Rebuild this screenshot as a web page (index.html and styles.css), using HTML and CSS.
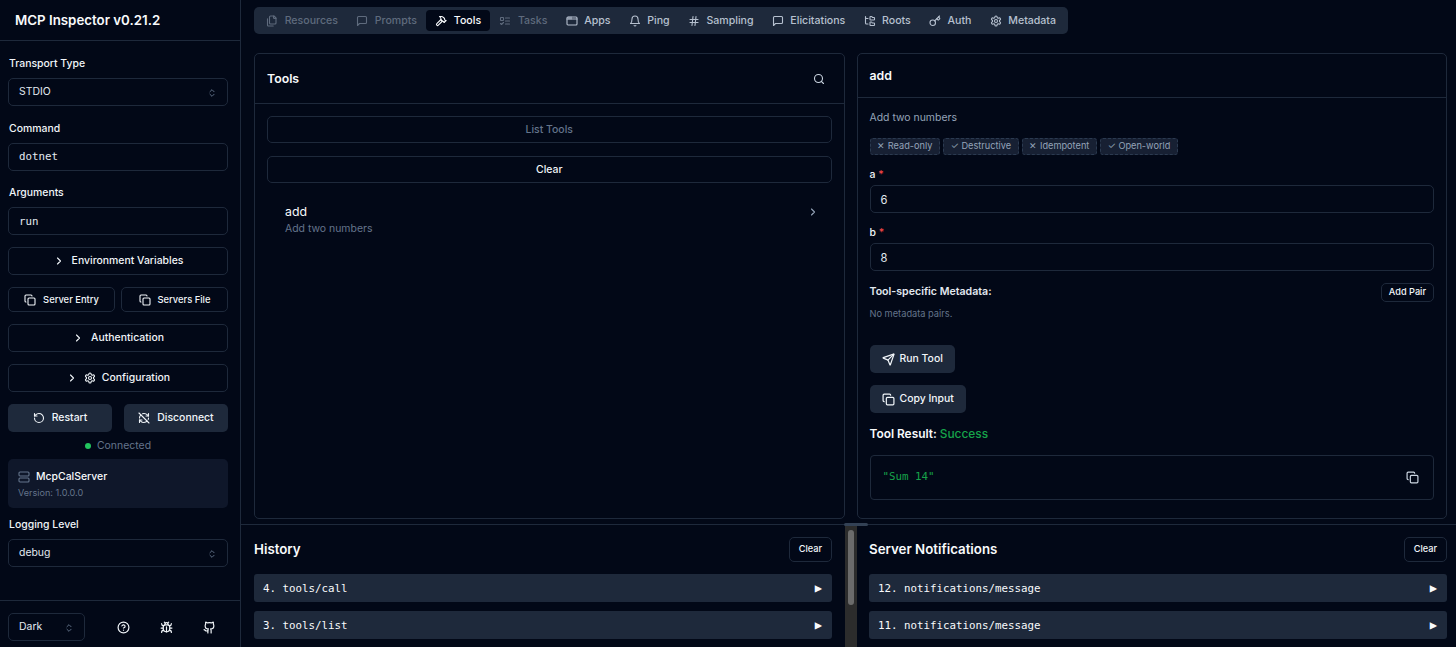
FILE: index.html
```html
<!DOCTYPE html>
<html lang="en">
<head>
<meta charset="utf-8">
<title>MCP Inspector</title>
<link rel="stylesheet" href="styles.css">
</head>
<body>
<svg class="sprite" xmlns="http://www.w3.org/2000/svg">
<symbol id="i-copy" viewBox="0 0 24 24"><rect x="8" y="8" width="14" height="14" rx="2"/><path d="M4 16c-1.1 0-2-.9-2-2V4c0-1.1.9-2 2-2h10c1.1 0 2 .9 2 2"/></symbol>
<symbol id="i-updown" viewBox="0 0 24 24"><path d="m7 15 5 5 5-5"/><path d="m7 9 5-5 5 5"/></symbol>
<symbol id="i-right" viewBox="0 0 24 24"><path d="m9 18 6-6-6-6"/></symbol>
<symbol id="i-gear" viewBox="0 0 24 24"><path d="M12.22 2h-.44a2 2 0 0 0-2 2v.18a2 2 0 0 1-1 1.73l-.43.25a2 2 0 0 1-2 0l-.15-.08a2 2 0 0 0-2.73.73l-.22.38a2 2 0 0 0 .73 2.73l.15.1a2 2 0 0 1 1 1.72v.51a2 2 0 0 1-1 1.74l-.15.09a2 2 0 0 0-.73 2.73l.22.38a2 2 0 0 0 2.73.73l.15-.08a2 2 0 0 1 2 0l.43.25a2 2 0 0 1 1 1.73V20a2 2 0 0 0 2 2h.44a2 2 0 0 0 2-2v-.18a2 2 0 0 1 1-1.73l.43-.25a2 2 0 0 1 2 0l.15.08a2 2 0 0 0 2.73-.73l.22-.39a2 2 0 0 0-.73-2.73l-.15-.08a2 2 0 0 1-1-1.74v-.5a2 2 0 0 1 1-1.74l.15-.09a2 2 0 0 0 .73-2.73l-.22-.38a2 2 0 0 0-2.73-.73l-.15.08a2 2 0 0 1-2 0l-.43-.25a2 2 0 0 1-1-1.73V4a2 2 0 0 0-2-2z"/><circle cx="12" cy="12" r="3"/></symbol>
<symbol id="i-restart" viewBox="0 0 24 24"><path d="M3 12a9 9 0 1 0 9-9 9.75 9.75 0 0 0-6.74 2.74L3 8"/><path d="M3 3v5h5"/></symbol>
<symbol id="i-off" viewBox="0 0 24 24"><path d="M21 8L18.74 5.74A9.75 9.75 0 0 0 12 3C11 3 10.03 3.16 9.13 3.47"/><path d="M8 16H3v5"/><path d="M3 12C3 9.51 4 7.26 5.64 5.64"/><path d="m3 16 2.26 2.26A9.75 9.75 0 0 0 12 21c2.49 0 4.74-1 6.36-2.64"/><path d="M21 12c0 1-.16 1.97-.47 2.87"/><path d="M21 3v5h-5"/><path d="M22 22 2 2"/></symbol>
<symbol id="i-server" viewBox="0 0 24 24"><rect x="2" y="2" width="20" height="8" rx="2"/><rect x="2" y="14" width="20" height="8" rx="2"/></symbol>
<symbol id="i-help" viewBox="0 0 24 24"><circle cx="12" cy="12" r="10"/><path d="M9.09 9a3 3 0 0 1 5.83 1c0 2-3 3-3 3"/><path d="M12 17h.01"/></symbol>
<symbol id="i-bug" viewBox="0 0 24 24"><path d="m8 2 1.88 1.88"/><path d="M14.12 3.88 16 2"/><path d="M9 7.13v-1a3.003 3.003 0 1 1 6 0v1"/><path d="M12 20c-3.3 0-6-2.7-6-6v-3a4 4 0 0 1 4-4h4a4 4 0 0 1 4 4v3c0 3.3-2.7 6-6 6"/><path d="M12 20v-9"/><path d="M6.53 9C4.6 8.8 3 7.1 3 5"/><path d="M6 13H2"/><path d="M3 21c0-2.1 1.7-3.9 3.8-4"/><path d="M20.97 5c0 2.1-1.6 3.8-3.5 4"/><path d="M22 13h-4"/><path d="M17.2 17c2.1.1 3.8 1.9 3.8 4"/></symbol>
<symbol id="i-github" viewBox="0 0 24 24"><path d="M15 22v-4a4.8 4.8 0 0 0-1-3.5c3 0 6-2 6-5.5.08-1.25-.27-2.48-1-3.5.28-1.15.28-2.35 0-3.5 0 0-1 0-3 1.5-2.64-.5-5.36-.5-8 0C6 2 5 2 5 2c-.3 1.15-.3 2.35 0 3.5A5.403 5.403 0 0 0 4 9c0 3.5 3 5.5 6 5.5-.39.49-.68 1.05-.85 1.65-.17.6-.22 1.23-.15 1.85v4"/><path d="M9 18c-4.51 2-5-2-7-2"/></symbol>
<symbol id="i-files" viewBox="0 0 24 24"><path d="M20 7h-3a2 2 0 0 1-2-2V2"/><path d="M9 18a2 2 0 0 1-2-2V4a2 2 0 0 1 2-2h7l4 4v10a2 2 0 0 1-2 2Z"/><path d="M3 7.6v12.8A1.6 1.6 0 0 0 4.6 22h9.8"/></symbol>
<symbol id="i-msg" viewBox="0 0 24 24"><path d="M21 15a2 2 0 0 1-2 2H7l-4 4V5a2 2 0 0 1 2-2h14a2 2 0 0 1 2 2z"/></symbol>
<symbol id="i-hammer" viewBox="0 0 24 24"><path d="m15 12-8.373 8.373a1 1 0 1 1-3-3L12 9"/><path d="m18 15 4-4"/><path d="m21.5 11.5-1.914-1.914A2 2 0 0 1 19 8.172V7l-2.26-2.26a6 6 0 0 0-4.202-1.756L9 2.96l.92.82A6.18 6.18 0 0 1 12 8.4V10l2 2h1.172a2 2 0 0 1 1.414.586L18.5 14.5"/></symbol>
<symbol id="i-todo" viewBox="0 0 24 24"><rect x="3" y="5" width="6" height="6" rx="1"/><path d="m3 17 2 2 4-4"/><path d="M13 6h8"/><path d="M13 12h8"/><path d="M13 18h8"/></symbol>
<symbol id="i-app" viewBox="0 0 24 24"><rect x="2" y="4" width="20" height="16" rx="2"/><path d="M10 4v4"/><path d="M2 8h20"/><path d="M6 4v4"/></symbol>
<symbol id="i-bell" viewBox="0 0 24 24"><path d="M6 8a6 6 0 0 1 12 0c0 7 3 9 3 9H3s3-2 3-9"/><path d="M10.3 21a1.94 1.94 0 0 0 3.4 0"/></symbol>
<symbol id="i-hash" viewBox="0 0 24 24"><path d="M4 9h16"/><path d="M4 15h16"/><path d="M10 3 8 21"/><path d="M16 3l-2 18"/></symbol>
<symbol id="i-tree" viewBox="0 0 24 24"><path d="M20 10a1 1 0 0 0 1-1V6a1 1 0 0 0-1-1h-2.5a1 1 0 0 1-.8-.4l-.9-1.2A1 1 0 0 0 15 3h-2a1 1 0 0 0-1 1v5a1 1 0 0 0 1 1Z"/><path d="M20 21a1 1 0 0 0 1-1v-3a1 1 0 0 0-1-1h-2.9a1 1 0 0 1-.88-.55l-.42-.85a1 1 0 0 0-.92-.6H13a1 1 0 0 0-1 1v5a1 1 0 0 0 1 1Z"/><path d="M3 5a2 2 0 0 0 2 2h3"/><path d="M3 3v13a2 2 0 0 0 2 2h3"/></symbol>
<symbol id="i-key" viewBox="0 0 24 24"><path d="M15.5 7.5l2.3 2.3a1 1 0 0 0 1.4 0l2.1-2.1a1 1 0 0 0 0-1.4L19 4"/><path d="m21 2-9.6 9.6"/><circle cx="7.5" cy="15.5" r="5.5"/></symbol>
<symbol id="i-search" viewBox="0 0 24 24"><circle cx="11" cy="11" r="8"/><path d="m21 21-4.3-4.3"/></symbol>
<symbol id="i-send" viewBox="0 0 24 24"><path d="M14.536 21.686a.5.5 0 0 0 .937-.024l6.5-19a.496.496 0 0 0-.635-.635l-19 6.5a.5.5 0 0 0-.024.937l7.93 3.18a2 2 0 0 1 1.112 1.11z"/><path d="m21.854 2.147-10.94 10.939"/></symbol>
</svg>

<div class="app">
  <aside class="sidebar">
    <header class="brand">MCP Inspector v0.21.2</header>
    <div class="side-body">
      <label class="label">Transport Type</label>
      <div class="control select"><span>STDIO</span><svg class="ic ic-updown"><use href="#i-updown"/></svg></div>
      <label class="label label-next">Command</label>
      <div class="control mono">dotnet</div>
      <label class="label label-next">Arguments</label>
      <div class="control mono">run</div>
      <button class="btn outline wide env"><svg class="ic"><use href="#i-right"/></svg><span>Environment Variables</span></button>
      <div class="pair small-pair">
        <button class="btn outline small"><svg class="ic"><use href="#i-copy"/></svg>Server Entry</button>
        <button class="btn outline small"><svg class="ic"><use href="#i-copy"/></svg>Servers File</button>
      </div>
      <button class="btn outline wide auth"><svg class="ic"><use href="#i-right"/></svg><span>Authentication</span></button>
      <button class="btn outline wide conf"><svg class="ic"><use href="#i-right"/></svg><svg class="ic"><use href="#i-gear"/></svg><span>Configuration</span></button>
      <div class="pair action-pair">
        <button class="btn solid"><svg class="ic"><use href="#i-restart"/></svg>Restart</button>
        <button class="btn solid"><svg class="ic"><use href="#i-off"/></svg>Disconnect</button>
      </div>
      <div class="status"><i class="dot"></i>Connected</div>
      <div class="server-card">
        <div class="server-name"><svg class="ic server-ic"><use href="#i-server"/></svg>McpCalServer</div>
        <div class="server-ver">Version: 1.0.0.0</div>
      </div>
      <label class="label label-log">Logging Level</label>
      <div class="control select"><span>debug</span><svg class="ic ic-updown"><use href="#i-updown"/></svg></div>
    </div>
    <footer class="side-foot">
      <div class="control select theme"><span>Dark</span><svg class="ic ic-updown"><use href="#i-updown"/></svg></div>
      <div class="foot-icons">
        <svg class="ic foot-ic"><use href="#i-help"/></svg>
        <svg class="ic foot-ic"><use href="#i-bug"/></svg>
        <svg class="ic foot-ic"><use href="#i-github"/></svg>
      </div>
    </footer>
  </aside>

  <main class="main">
    <div class="workspace">
      <nav class="tabs">
        <a class="tab off"><svg class="ic"><use href="#i-files"/></svg>Resources</a>
        <a class="tab off"><svg class="ic"><use href="#i-msg"/></svg>Prompts</a>
        <a class="tab active"><svg class="ic"><use href="#i-hammer"/></svg>Tools</a>
        <a class="tab off"><svg class="ic"><use href="#i-todo"/></svg>Tasks</a>
        <a class="tab"><svg class="ic"><use href="#i-app"/></svg>Apps</a>
        <a class="tab"><svg class="ic"><use href="#i-bell"/></svg>Ping</a>
        <a class="tab"><svg class="ic"><use href="#i-hash"/></svg>Sampling</a>
        <a class="tab"><svg class="ic"><use href="#i-msg"/></svg>Elicitations</a>
        <a class="tab"><svg class="ic"><use href="#i-tree"/></svg>Roots</a>
        <a class="tab"><svg class="ic"><use href="#i-key"/></svg>Auth</a>
        <a class="tab"><svg class="ic"><use href="#i-gear"/></svg>Metadata</a>
      </nav>
      <div class="panels">
        <section class="panel">
          <div class="panel-head list-head"><h2>Tools</h2><svg class="ic search"><use href="#i-search"/></svg></div>
          <div class="panel-body list-body">
            <button class="btn outline block faded">List Tools</button>
            <button class="btn outline block">Clear</button>
            <div class="tool-row">
              <div><div class="tool-name">add</div><div class="tool-desc">Add two numbers</div></div>
              <svg class="ic tool-chev"><use href="#i-right"/></svg>
            </div>
          </div>
        </section>
        <section class="panel">
          <div class="panel-head detail-head"><h2>add</h2></div>
          <div class="panel-body detail-body">
            <p class="desc">Add two numbers</p>
            <div class="badges">
              <span class="badge">✕ Read-only</span>
              <span class="badge">✓ Destructive</span>
              <span class="badge">✕ Idempotent</span>
              <span class="badge">✓ Open-world</span>
            </div>
            <div class="field-label">a <b class="req">*</b></div>
            <div class="control field">6</div>
            <div class="field-label">b <b class="req">*</b></div>
            <div class="control field">8</div>
            <div class="meta-head"><strong>Tool-specific Metadata:</strong><button class="btn outline add-pair">Add Pair</button></div>
            <p class="no-meta">No metadata pairs.</p>
            <div><button class="btn solid inline run"><svg class="ic"><use href="#i-send"/></svg>Run Tool</button></div>
            <div><button class="btn solid inline copy"><svg class="ic"><use href="#i-copy"/></svg>Copy Input</button></div>
            <div class="result-title">Tool Result: <span class="ok">Success</span></div>
            <div class="result"><code>"Sum 14"</code><svg class="ic"><use href="#i-copy"/></svg></div>
          </div>
        </section>
      </div>
    </div>
    <div class="console">
      <i class="grip"></i>
      <section class="log log-left">
        <div class="log-head"><h3>History</h3><button class="btn outline clear">Clear</button></div>
        <div class="log-row"><span>4. tools/call</span><em>▶</em></div>
        <div class="log-row"><span>3. tools/list</span><em>▶</em></div>
      </section>
      <div class="scroll"><i class="thumb"></i></div>
      <section class="log log-right">
        <div class="log-head"><h3>Server Notifications</h3><button class="btn outline clear">Clear</button></div>
        <div class="log-row"><span>12. notifications/message</span><em>▶</em></div>
        <div class="log-row"><span>11. notifications/message</span><em>▶</em></div>
      </section>
    </div>
  </main>
</div>
</body>
</html>
```

FILE: styles.css
```css
* { box-sizing: border-box; }
html, body { margin: 0; height: 100%; }
body {
  background: #020817;
  color: #f8fafc;
  font: 400 10.45px/1.4 Inter, "Liberation Sans", sans-serif;
  overflow: hidden;
}
.sprite { display: none; }
.ic {
  width: 12px; height: 12px; flex: none;
  fill: none; stroke: currentColor; stroke-width: 2.2;
  stroke-linecap: round; stroke-linejoin: round;
}
h2, h3, p { margin: 0; }
button { font: inherit; color: inherit; background: none; border: 0; padding: 0; }

.app { display: flex; height: 647px; }

/* sidebar */
.sidebar {
  width: 241px; flex: none;
  border-right: 1px solid #1e293b;
  display: flex; flex-direction: column;
}
.brand {
  height: 41px; padding: 0 15px; flex: none;
  display: flex; align-items: center;
  border-bottom: 1px solid #1e293b;
  font-size: 13.3px; font-weight: 600;
}
.side-body { flex: 1; padding: 14px 12px 0 8px; display: flex; flex-direction: column; }
.label { display: block; height: 16px; padding: 1px 0 0 1px; line-height: 16px; font-weight: 500; color: #f1f5f9; margin-bottom: 7px; }
.label-next { margin-top: 13.5px; }
.label-log { margin-top: 8px; }
.control {
  height: 28px; padding: 1px 10px 0;
  border: 1px solid #1e293b; border-radius: 5px;
  display: flex; align-items: center; justify-content: space-between;
  flex: none; color: #e2e8f0;
}
.mono { font: 400 10.8px "DejaVu Sans Mono", monospace; padding-top: 0; }
.ic-updown { width: 10px; height: 10px; color: #64748b; }
.btn {
  display: inline-flex; align-items: center; justify-content: center;
  gap: 7px; border-radius: 5px; font-weight: 500; flex: none;
}
.outline { border: 1px solid #1e293b; background: #020817; color: #f1f5f9; }
.solid { background: #1e293b; color: #f1f5f9; }
.wide { width: 100%; height: 27.5px; margin-top: 12px; padding-top: 2px; }
.wide .ic { margin-top: -2px; }
.pair { display: flex; }
.small-pair { gap: 6px; margin-top: 12.5px; }
.small { flex: 1; height: 25px; font-size: 9.4px; gap: 7px; }
.conf { margin-top: 12.5px; gap: 6px; }
.action-pair { gap: 12px; margin-top: 12.5px; }
.action-pair .btn { flex: 1; height: 27.5px; padding-top: 1px; }
.status { height: 14px; margin-top: 6.5px; padding-top: 2px; display: flex; align-items: center; justify-content: center; gap: 6px; color: #64748b; }
.dot { width: 6px; height: 6px; border-radius: 50%; background: #22c55e; }
.server-card { height: 49px; margin-top: 7px; padding: 10px 10px 0; background: #0f172a; border-radius: 5px; flex: none; }
.server-name { display: flex; align-items: center; gap: 6px; height: 16px; font-weight: 500; }
.server-ic { color: #64748b; }
.server-ver { font-size: 9.1px; line-height: 13px; color: #64748b; margin-top: 1px; }
.side-foot {
  height: 47px; flex: none; padding: 12px 12px 0 8px;
  border-top: 1px solid #1e293b;
  display: flex; align-items: flex-start; justify-content: space-between;
}
.theme { width: 77px; }
.foot-icons { display: flex; gap: 30px; padding: 8px 0 0; margin-right: 12px; }
.foot-ic { width: 13px; height: 13px; color: #f1f5f9; }

/* main */
.main { flex: 1; min-width: 0; display: flex; flex-direction: column; }
.workspace { height: 525px; flex: none; padding: 7px 9px 0 13px; border-bottom: 1px solid #1e293b; }
.tabs {
  display: inline-flex; align-items: center; height: 27px; padding: 0 3px;
  background: #1e293b; border-radius: 5px; color: #b6c0cf;
  font-size: 10.6px; font-weight: 500;
}
.tab { display: flex; align-items: center; gap: 6.5px; height: 21px; padding: 1px 9.15px 0; border-radius: 4px; }
.tab.off { color: #5f6b7d; }
.tab.active { background: #020817; color: #f8fafc; }
.panels { display: flex; gap: 12px; margin-top: 19px; height: 466px; }
.panel { flex: 1; min-width: 0; border: 1px solid #1e293b; border-radius: 5px; display: flex; flex-direction: column; }
.panel-head { display: flex; align-items: center; justify-content: space-between; padding: 0 12px; border-bottom: 1px solid #1e293b; flex: none; }
.list-head { height: 50px; }
.detail-head { height: 44px; }
.panel-head h2 { font-size: 12.3px; font-weight: 600; }
.search { color: #cbd5e1; margin-right: 7px; }
.panel-body { padding: 12px; flex: 1; }
.block { width: 100%; height: 27px; margin-bottom: 13px; display: flex; padding-top: 1px; }
.faded { color: #64748b; }
.tool-row { display: flex; align-items: flex-start; justify-content: space-between; padding: 7px 13px 0 18px; }
.tool-chev { margin-top: 3px; color: #94a3b8; }
.tool-name { font-size: 12.3px; line-height: 18px; }
.tool-desc { color: #64748b; line-height: 16px; }
.desc { color: #94a3b8; line-height: 16px; }
.badges { display: flex; gap: 3px; margin-top: 12px; }
.badge { height: 17px; padding: 0 6.7px; display: flex; align-items: center; background: #172033; border: 1px dashed #2b3a50; border-radius: 3px; font-size: 9.2px; color: #94a3b8; }
.field-label { margin-top: 11px; height: 16px; padding-top: 1px; line-height: 16px; font-weight: 500; color: #f1f5f9; }
.req { color: #ef4444; font-weight: 500; }
.field { height: 28px; margin-top: 3px; padding-top: 3px; font-size: 11.2px; }
.meta-head { display: flex; justify-content: space-between; align-items: center; margin-top: 12px; height: 19px; }
.meta-head strong { font-weight: 600; font-size: 10.6px; color: #e2e8f0; }
.add-pair { height: 19px; padding: 0 7px; font-size: 9.2px; }
.no-meta { color: #64748b; font-size: 9.25px; margin-top: 5px; line-height: 14px; }
.inline { height: 28px; padding: 0 12.5px 0 12px; gap: 5px; }
.inline .ic { width: 13px; height: 13px; }
.run { margin-top: 24px; }
.copy { margin-top: 12px; }
.result-title { margin-top: 12px; font-size: 11.9px; font-weight: 600; line-height: 18px; }
.ok { color: #16a34a; font-weight: 500; }
.result {
  margin-top: 12px; height: 45px; padding: 0 14px 0 12px; color: #cbd5e1;
  border: 1px solid #1e293b; border-radius: 4px;
  display: flex; align-items: center; justify-content: space-between;
}
.result .ic { width: 13px; height: 13px; }
.result code { font: 10.8px "DejaVu Sans Mono", monospace; color: #16a34a; padding-bottom: 2px; }

/* console */
.console { flex: 1; display: flex; position: relative; min-height: 0; }
.grip { position: absolute; top: -2px; left: 603px; width: 24px; height: 3px; border-radius: 2px; background: #334155; }
.log { min-width: 0; padding-top: 12px; }
.log-left { width: 604px; flex: none; padding: 12px 13px 0 13px; }
.log-right { flex: 1; padding: 12px 9px 0 12px; }
.log-head { display: flex; align-items: center; justify-content: space-between; height: 25px; margin-bottom: 12px; }
.log-head h3 { font-size: 13.3px; font-weight: 600; }
.clear { height: 25px; padding: 0 9px; font-size: 9.2px; }
.log-row {
  height: 28px; padding: 0 10px 0 9px; margin-bottom: 9px;
  background: #1e293b; border-radius: 3px;
  display: flex; align-items: center; justify-content: space-between;
  font: 10.8px "DejaVu Sans Mono", monospace;
}
.log-row em { font-style: normal; font-size: 12px; }
.scroll { width: 12px; flex: none; background: #2c2c2c; display: flex; justify-content: center; padding-top: 5px; }
.thumb { width: 6px; height: 75px; border-radius: 3px; background: #6b6b6b; }
```
